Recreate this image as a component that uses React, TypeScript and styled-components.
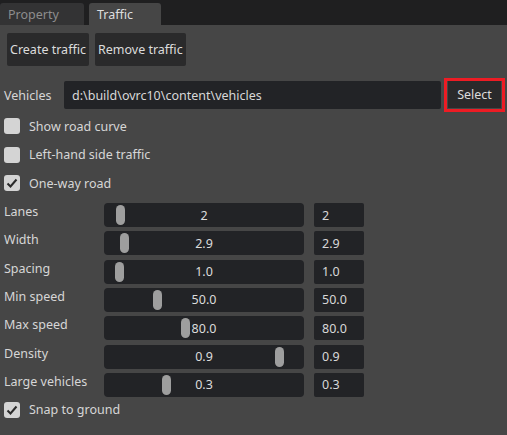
import React from 'react';
import styled, { createGlobalStyle } from 'styled-components';

const GlobalStyle = createGlobalStyle`
  html, body {
    margin: 0;
    padding: 0;
    background-color: #464646;
  }
  body {
    font-family: 'Noto Sans', 'Open Sans', sans-serif;
    font-size: 12.5px;
    color: #d6d6d6;
  }
`;

const Panel = styled.div`
  width: 507px;
  height: 435px;
  background-color: #464646;
  overflow: hidden;
`;

const TabBar = styled.div`
  display: flex;
  align-items: flex-end;
  gap: 5px;
  height: 25px;
  background-color: #1f1f20;
`;

const Tab = styled.div<{ active?: boolean }>`
  height: 22px;
  display: flex;
  align-items: center;
  padding: 0 8px;
  width: ${p => (p.active ? '72px' : '84px')};
  box-sizing: border-box;
  border-radius: 3px 3px 0 0;
  background-color: ${p => (p.active ? '#464646' : '#333334')};
  color: ${p => (p.active ? '#dedede' : '#8d8d8d')};
`;

const Body = styled.div`
  display: flex;
  flex-direction: column;
  padding: 0 2px 0 4px;
`;

const ButtonRow = styled.div`
  display: flex;
  gap: 6px;
  margin: 8px 0 0 3px;
`;

const Button = styled.div`
  height: 33px;
  display: flex;
  align-items: center;
  padding: 0 3px;
  box-sizing: border-box;
  background-color: #2a2a2b;
  border-radius: 2px;
  color: #dcdcdc;
  white-space: nowrap;
`;

const PathRow = styled.div`
  display: flex;
  align-items: center;
  margin-top: 12px;
  height: 34px;
`;

const PathLabel = styled.div`
  width: 60px;
`;

const PathInput = styled.div`
  flex: 1;
  height: 28px;
  display: flex;
  align-items: center;
  padding-left: 8px;
  margin-right: 3px;
  background-color: #222326;
  border-radius: 2px;
  color: #d8d8d8;
`;

const Highlight = styled.div`
  width: 61px;
  height: 34px;
  box-sizing: border-box;
  border: 3px solid #ed1c24;
  padding: 0 1px 1px 1px;
  display: flex;
`;

const SelectButton = styled.div`
  flex: 1;
  display: flex;
  align-items: center;
  justify-content: center;
  background-color: #2a2a2b;
  color: #dcdcdc;
`;

const CheckRow = styled.div<{ h?: number }>`
  display: flex;
  align-items: center;
  gap: 9px;
  height: ${p => p.h ?? 28.5}px;
`;

const Box = styled.div`
  width: 16px;
  height: 16px;
  border-radius: 3px;
  background-color: #d4d4d4;
  display: flex;
  align-items: center;
  justify-content: center;
`;

const SliderGrid = styled.div`
  display: grid;
  grid-template-columns: 90px 200px 50px;
  column-gap: 10px;
  row-gap: 4.33px;
  margin-top: 5.5px;
  align-items: center;
`;

const SliderLabel = styled.div`
  align-self: start;
  line-height: 18px;
  white-space: nowrap;
`;

const Track = styled.div`
  position: relative;
  height: 24px;
  background-color: #222326;
  border-radius: 4px;
  display: flex;
  align-items: center;
  justify-content: center;
`;

const Handle = styled.div`
  position: absolute;
  top: 2px;
  width: 9px;
  height: 20px;
  border-radius: 4.5px;
  background-color: #9e9e9e;
`;

const TrackText = styled.span`
  position: relative;
  color: #dcdcdc;
`;

const ValueBox = styled.div`
  height: 24px;
  display: flex;
  align-items: center;
  padding-left: 8px;
  background-color: #222326;
  border-radius: 2px;
  color: #d8d8d8;
`;

const Check = ({ checked }: { checked?: boolean }) => (
  <Box>
    {checked && (
      <svg width="12" height="12" viewBox="0 0 12 12">
        <polyline points="1.5,6.5 4.5,9.5 10.5,2.5" fill="none" stroke="#2a2a2a" strokeWidth="2" />
      </svg>
    )}
  </Box>
);

const sliders = [
  { label: 'Lanes', value: '2', at: 16.5 },
  { label: 'Width', value: '2.9', at: 20 },
  { label: 'Spacing', value: '1.0', at: 15 },
  { label: 'Min speed', value: '50.0', at: 53 },
  { label: 'Max speed', value: '80.0', at: 81 },
  { label: 'Density', value: '0.9', at: 175 },
  { label: 'Large vehicles', value: '0.3', at: 62.5 },
];

export default function App() {
  return (
    <Panel>
      <GlobalStyle />
      <TabBar>
        <Tab>Property</Tab>
        <Tab active>Traffic</Tab>
      </TabBar>
      <Body>
        <ButtonRow>
          <Button>Create traffic</Button>
          <Button>Remove traffic</Button>
        </ButtonRow>
        <PathRow>
          <PathLabel>Vehicles</PathLabel>
          <PathInput>d:\build\ovrc10\content\vehicles</PathInput>
          <Highlight>
            <SelectButton>Select</SelectButton>
          </Highlight>
        </PathRow>
        <CheckRow>
          <Check />
          <span>Show road curve</span>
        </CheckRow>
        <CheckRow>
          <Check />
          <span>Left-hand side traffic</span>
        </CheckRow>
        <CheckRow>
          <Check checked />
          <span>One-way road</span>
        </CheckRow>
        <SliderGrid>
          {sliders.map(s => (
            <React.Fragment key={s.label}>
              <SliderLabel>{s.label}</SliderLabel>
              <Track>
                <Handle style={{ left: s.at - 4.5 }} />
                <TrackText>{s.value}</TrackText>
              </Track>
              <ValueBox>{s.value}</ValueBox>
            </React.Fragment>
          ))}
        </SliderGrid>
        <CheckRow h={26}>
          <Check checked />
          <span>Snap to ground</span>
        </CheckRow>
      </Body>
    </Panel>
  );
}
